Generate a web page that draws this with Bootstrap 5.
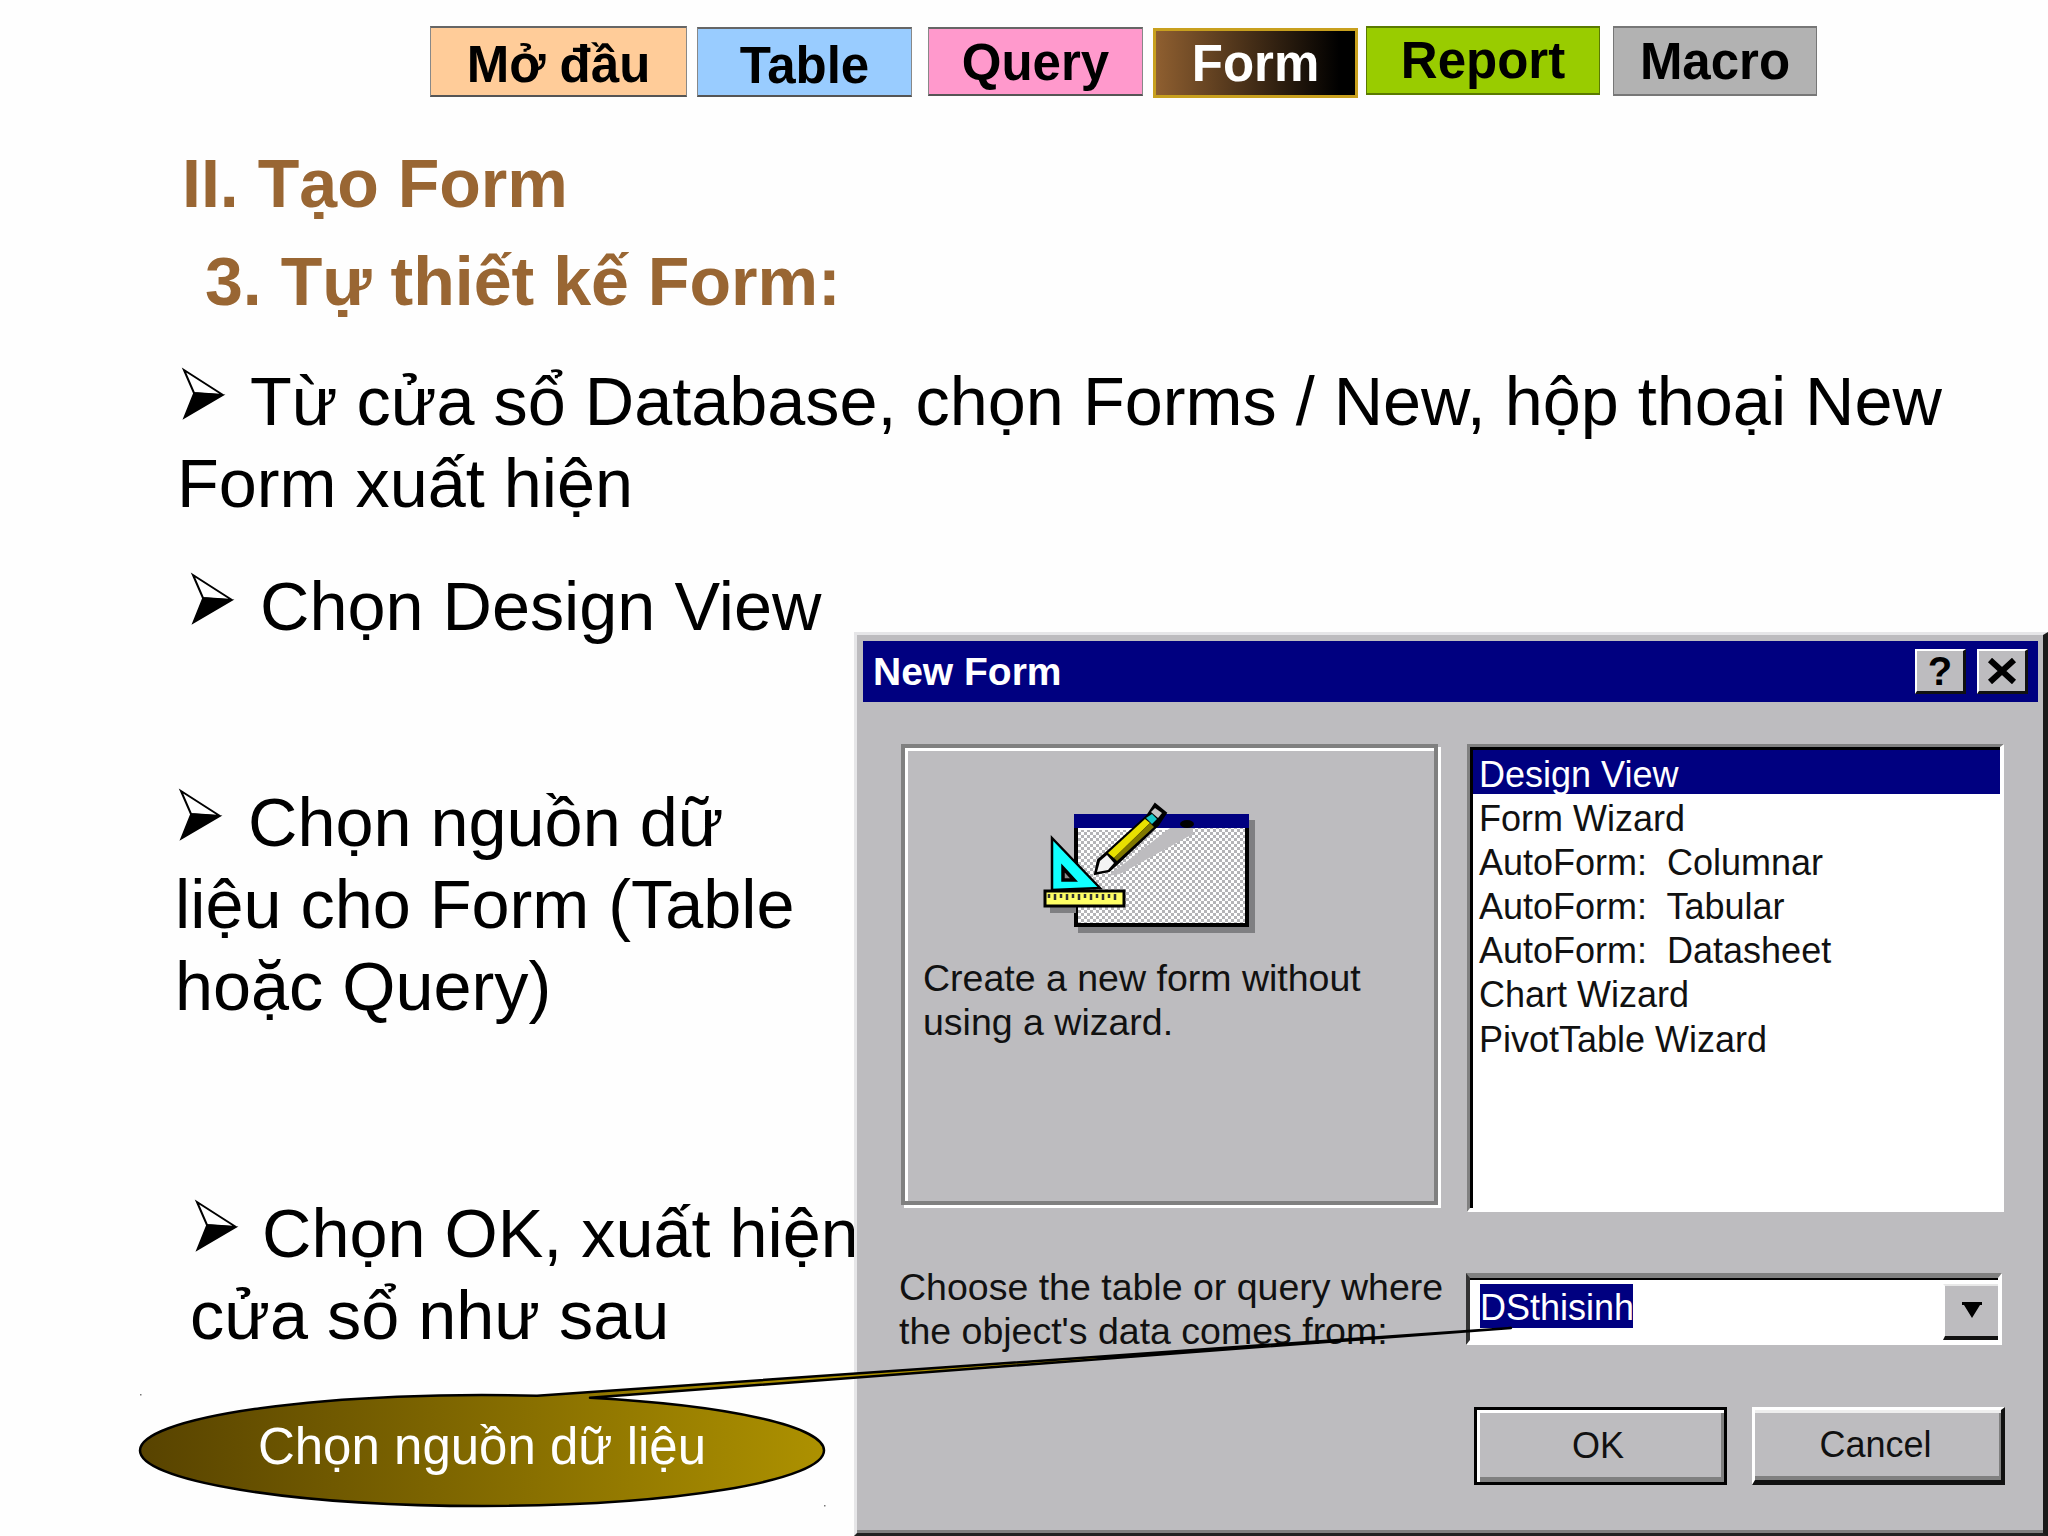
<!DOCTYPE html>
<html lang="vi">
<head>
<meta charset="utf-8">
<title>II. Tạo Form</title>
<link href="https://cdn.jsdelivr.net/npm/bootstrap@5.3.0/dist/css/bootstrap.min.css" rel="stylesheet">
<style>
html,body{margin:0;background:#fff;}
.slide-page{position:relative;width:2048px;height:1536px;overflow:hidden;background:#fefefe;font-family:"Liberation Sans",Arial,sans-serif;color:#000;}
.tab-row{padding:0 0 0 430px;align-items:flex-start;height:98px;}
.slide-tab{display:flex;align-items:center;justify-content:center;padding:0;border-radius:0;border:0;border-top:2px solid #666;border-bottom:2px solid #555;border-left:1px solid #888;border-right:1px solid #888;font-size:51px;font-weight:700;color:#000;line-height:1;}
.tab-intro{width:257px;height:71px;margin-top:26px;background:#ffcc99;padding-top:6px;}
.tab-table{width:215px;height:70px;margin-top:27px;margin-left:10px;background:#99ccff;padding-top:6px;}
.tab-query{width:215px;height:69px;margin-top:27px;margin-left:16px;background:#ff99cc;padding-top:1px;}
.tab-form{width:205px;height:70px;margin-top:28px;margin-left:10px;background:linear-gradient(90deg,#8f5f30,#000 92%);border:3px solid #c8a01e;color:#fff;}
.tab-report{width:234px;height:69px;margin-top:26px;margin-left:8px;background:#99cc00;border-color:#5a7a00;}
.tab-macro{width:204px;height:70px;margin-top:26px;margin-left:13px;background:#b2b2b2;border-color:#777;}
.slide-title{font-size:68.1px;line-height:82px;font-weight:700;color:#996633;margin:0;}
.title-one{margin:44px 0 0 182px;}
.title-two{margin:16px 0 0 205px;}
.point{font-size:68.4px;line-height:81.7px;margin:0;white-space:nowrap;}
.point-one{margin:39px 0 0 177px;}
.point-two{margin:42px 0 0 190px;}
.point-three{margin:134px 0 0 175px;}
.point-four{margin:166px 0 0 190px;}
.arrow-bullet{width:42px;height:50px;vertical-align:6px;overflow:visible;}
.point-one .arrow-bullet{margin:0 25px 0 6px;}
.point-two .arrow-bullet{margin:0 26px 0 2px;}
.point-three .arrow-bullet{margin:0 26px 0 5px;}
.point-four .arrow-bullet{margin:0 24px 0 6px;}
.win-dialog{position:absolute;left:854px;top:632px;right:0;bottom:0;background:#bdbcbf;border-top:3px solid #e6e6e8;border-left:3px solid #e6e6e8;border-right:5px solid #1a1a1a;border-bottom:3px solid #222;box-shadow:inset 0 -3px 0 #808080;padding:6px 5px 0 6px;font-size:37.5px;line-height:44px;color:#111;}
.win-title{height:61px;background:#000080;color:#fff;font-weight:700;font-size:39px;line-height:1;padding:0 10px 0 10px;}
.win-ctl{width:51px;height:45px;background:#bdbcbf;border-style:solid;border-width:2px 3px 3px 2px;border-color:#fff #111 #111 #fff;color:#000;font-weight:700;font-size:40px;line-height:1;}
.win-ctl-gap{margin-right:11px;}
.win-top{margin:42px 0 0 38px;}
.pick-preview{width:537px;height:461px;box-sizing:border-box;border:4px solid #808080;box-shadow:inset 3px 3px 0 #fff,3px 3px 0 #fff;padding:42px 0 0 125px;}
.pick-preview svg{display:block;margin-bottom:-2px;}
.pick-text{margin:8px 0 0 -107px;white-space:nowrap;}
.pick-list{width:537px;height:468px;margin-left:29px;box-sizing:border-box;background:#fff;border-style:solid;border-width:3px 4px 4px 3px;border-color:#808080 #fff #fff #808080;box-shadow:inset 3px 3px 0 #000;padding:3px 0 0 3px;list-style:none;font-size:36px;}
.pick-row{padding:3px 0 0 6px;height:44.1px;white-space:pre;box-sizing:border-box;}
.pick-on{background:#000080;color:#fff;}
.win-source{margin:61px 0 0 36px;height:72px;}
.source-label{width:567px;margin-top:-8px;white-space:nowrap;}
.source-box{width:536px;height:72px;box-sizing:border-box;background:#fff;border-style:solid;border-width:5px 4px 5px 4px;border-color:#808080 #fff #fff #333;box-shadow:inset 0 2px 0 #000;padding:6px 0 0 10px;font-size:36px;}
.source-value{background:#000080;color:#fff;display:inline-block;height:44px;width:153px;line-height:47px;}
.source-drop{width:55px;height:56px;background:#bdbcbf;border-style:solid;border-width:2px 0 4px 2px;border-color:#e8e8e8 transparent #111 #fff;}
.win-actions{margin:62px 0 0 611px;gap:25px;}
.win-btn{width:253px;height:78px;padding:0 5px 0 0;border-radius:0;background:#bdbcbf;color:#111;font-size:36px;border-style:solid;}
.win-ok{border-width:3px;border-color:#000;box-shadow:inset 3px 3px 0 #fff,inset -3px -5px 0 #808080;}
.win-cancel{border-width:3px 4px 5px 3px;border-color:#fff #111 #111 #fff;box-shadow:inset 0 3px 0 #eee,inset -2px -4px 0 #808080;}
.call-shape{position:absolute;left:0;top:0;width:2048px;height:1536px;pointer-events:none;z-index:3;}
.call-text{position:absolute;left:140px;top:1395px;width:684px;height:102px;z-index:4;color:#fff;font-size:51px;line-height:1;}
</style>
</head>
<body>
<div class="slide-page">
  <nav class="d-flex tab-row">
    <a class="btn slide-tab tab-intro" href="#">Mở đầu</a>
    <a class="btn slide-tab tab-table" href="#">Table</a>
    <a class="btn slide-tab tab-query" href="#">Query</a>
    <a class="btn slide-tab tab-form" href="#">Form</a>
    <a class="btn slide-tab tab-report" href="#">Report</a>
    <a class="btn slide-tab tab-macro" href="#">Macro</a>
  </nav>

  <h1 class="slide-title title-one">II. Tạo Form</h1>
  <h2 class="slide-title title-two">3. Tự thiết kế Form:</h2>

  <p class="point point-one"><svg class="arrow-bullet" viewBox="0 0 42 50"><path d="M1 1 40 26 11 24Z" fill="#fff" stroke="#000" stroke-width="2"/><path d="M40 26 1 49 11 24Z" fill="#000" stroke="#000" stroke-width="1.5"/></svg>Từ cửa sổ Database, chọn Forms / New, hộp thoại New<br>Form xuất hiện</p>
  <p class="point point-two"><svg class="arrow-bullet" viewBox="0 0 42 50"><path d="M1 1 40 26 11 24Z" fill="#fff" stroke="#000" stroke-width="2"/><path d="M40 26 1 49 11 24Z" fill="#000" stroke="#000" stroke-width="1.5"/></svg>Chọn Design View</p>
  <p class="point point-three"><svg class="arrow-bullet" viewBox="0 0 42 50"><path d="M1 1 40 26 11 24Z" fill="#fff" stroke="#000" stroke-width="2"/><path d="M40 26 1 49 11 24Z" fill="#000" stroke="#000" stroke-width="1.5"/></svg>Chọn nguồn dữ<br>liệu cho Form (Table<br>hoặc Query)</p>
  <p class="point point-four"><svg class="arrow-bullet" viewBox="0 0 42 50"><path d="M1 1 40 26 11 24Z" fill="#fff" stroke="#000" stroke-width="2"/><path d="M40 26 1 49 11 24Z" fill="#000" stroke="#000" stroke-width="1.5"/></svg>Chọn OK, xuất hiện<br>cửa sổ như sau</p>

  <section class="win-dialog">
    <div class="win-title d-flex align-items-center justify-content-between">
      <span>New Form</span>
      <span class="d-flex">
        <span class="win-ctl win-ctl-gap d-flex align-items-center justify-content-center">?</span>
        <span class="win-ctl d-flex align-items-center justify-content-center"><svg width="30" height="26" viewBox="0 0 30 26"><path d="M3 2 27 24M27 2 3 24" stroke="#000" stroke-width="6" fill="none"/></svg></span>
      </span>
    </div>

    <div class="d-flex align-items-start win-top">
      <div class="pick-preview">
        <svg width="240" height="160" viewBox="0 0 240 160">
          <defs>
            <pattern id="dither" width="6" height="6" patternUnits="userSpaceOnUse">
              <rect width="6" height="6" fill="#fff"/>
              <rect width="3" height="3" fill="#b4b4b7"/>
              <rect x="3" y="3" width="3" height="3" fill="#b4b4b7"/>
            </pattern>
          </defs>
          <rect x="48" y="30" width="177" height="113" fill="#7f7f82"/>
          <rect x="44" y="24" width="175" height="113" fill="#000"/>
          <rect x="44" y="24" width="175" height="14" fill="#000080"/>
          <rect x="48" y="38" width="167" height="95" fill="url(#dither)"/>
          <rect x="48" y="38" width="92" height="2" fill="#fff"/>
          <ellipse cx="157" cy="34" rx="7" ry="4" fill="#000"/>
          <path d="M78 86 140 38H163V44L90 84Z" fill="#bdbcbf"/>
          <path d="M65 84 68 70 76 63 117 26 125 14 136 23 128 35 87 74 79 81Z" fill="#000" stroke="#000" stroke-width="2"/>
          <path d="M78 63 115 29 120 33 84 68Z" fill="#e8e000"/>
          <path d="M84 68 120 33 124 37 87 71Z" fill="#807800"/>
          <path d="M67 82 70 71 77 65 84 73 78 80Z" fill="#f4f4f4"/>
          <path d="M116 28 122 24 127 29 122 34Z" fill="#19c8c8"/>
          <path d="M121 22 125 18 132 23 128 28Z" fill="#c4c4c4"/>
          <rect x="20" y="112" width="26" height="11" fill="#7f7f82"/>
          <path d="M22 48 70 98 22 100Z" fill="#1ff" stroke="#000" stroke-width="2.5"/>
          <path d="M33 78 44 90 33 90Z" fill="#8a8a8a" stroke="#000" stroke-width="3.5"/>
          <rect x="15" y="101" width="79" height="15" fill="#ffff66" stroke="#000" stroke-width="3"/>
          <path d="M19 104v4M25 104v6M31 104v4M37 104v6M43 104v4M49 104v6M55 104v4M61 104v6M67 104v4M73 104v6M79 104v4M85 104v6" stroke="#333" stroke-width="2.5" fill="none"/>
        </svg>
        <div class="pick-text">Create a new form without<br>using a wizard.</div>
      </div>
      <ul class="pick-list mb-0">
        <li class="pick-row pick-on">Design View</li>
        <li class="pick-row">Form Wizard</li>
        <li class="pick-row">AutoForm:  Columnar</li>
        <li class="pick-row">AutoForm:  Tabular</li>
        <li class="pick-row">AutoForm:  Datasheet</li>
        <li class="pick-row">Chart Wizard</li>
        <li class="pick-row">PivotTable Wizard</li>
      </ul>
    </div>

    <div class="d-flex align-items-start win-source">
      <div class="source-label">Choose the table or query where<br>the object's data comes from:</div>
      <div class="source-box d-flex justify-content-between align-items-start">
        <span class="source-value">DSthisinh</span>
        <span class="source-drop d-flex align-items-center justify-content-center"><svg width="20" height="18" viewBox="0 0 20 18"><path d="M0 0H20V3H18L10 16 2 3H0Z" fill="#000"/></svg></span>
      </div>
    </div>

    <div class="d-flex win-actions">
      <button type="button" class="btn win-btn win-ok">OK</button>
      <button type="button" class="btn win-btn win-cancel">Cancel</button>
    </div>
  </section>

  <svg class="call-shape" viewBox="0 0 2048 1536">
    <defs>
      <linearGradient id="goldfill" gradientUnits="userSpaceOnUse" x1="140" y1="0" x2="824" y2="0">
        <stop offset="0" stop-color="#584300"/>
        <stop offset="1" stop-color="#ad9100"/>
      </linearGradient>
    </defs>
    <path d="M537 1395.7 1511 1328 590 1397.8A342 55.5 0 0 1 824 1450.5A342 55.5 0 0 1 140 1450.5A342 55.5 0 0 1 537 1395.7Z" fill="url(#goldfill)" stroke="#000" stroke-width="2.5" stroke-linejoin="round"/>
    <rect x="140" y="1394" width="1.5" height="1.5" fill="#777"/>
    <rect x="824" y="1505" width="1.5" height="1.5" fill="#777"/>
  </svg>
  <div class="call-text d-flex align-items-center justify-content-center">Chọn nguồn dữ liệu</div>
</div>
<script src="https://cdn.jsdelivr.net/npm/bootstrap@5.3.0/dist/js/bootstrap.bundle.min.js"></script>
</body>
</html>
